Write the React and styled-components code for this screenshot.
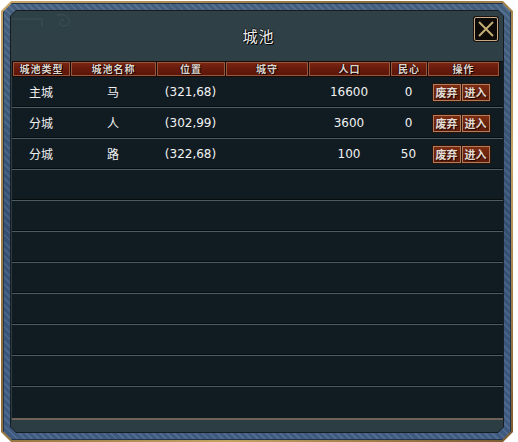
import React from 'react';
import styled, { createGlobalStyle } from 'styled-components';

const GlobalStyle = createGlobalStyle`
  html, body {
    margin: 0;
    padding: 0;
    background: #ffffff;
  }
  body {
    font-family: "DejaVu Sans", "Noto Sans CJK SC", sans-serif;
  }
`;

const bevel = (c) => `polygon(${c}px 0, calc(100% - ${c}px) 0, 100% ${c}px, 100% calc(100% - ${c}px), calc(100% - ${c}px) 100%, ${c}px 100%, 0 calc(100% - ${c}px), 0 ${c}px)`;

const Frame = styled.div`
  margin: 1px 0 0 1px;
  width: 512px;
  height: 441px;
  padding: 2px;
  box-sizing: border-box;
  background: linear-gradient(135deg, #c9a868, #8a6a38 40%, #c4a464 70%, #7a5a30);
  clip-path: ${bevel(10)};
`;

const Stone = styled.div`
  height: 100%;
  padding: 7px;
  box-sizing: border-box;
  background:
    repeating-linear-gradient(45deg, rgba(255,255,255,0.06) 0 2px, rgba(0,0,0,0.08) 2px 5px),
    linear-gradient(180deg, #4a6688, #39557a 50%, #45628a);
  clip-path: ${bevel(9)};
  box-shadow: inset 0 0 0 1px #22344c;
`;

const Rim = styled.div`
  height: 100%;
  padding: 1px;
  box-sizing: border-box;
  background: #151d21;
  clip-path: ${bevel(6)};
`;

const Panel = styled.div`
  position: relative;
  height: 100%;
  box-sizing: border-box;
  padding: 0 0 0 1px;
  display: flex;
  flex-direction: column;
  background: linear-gradient(180deg, #2f4147, #2a3a40 60%, #2c3d43);
  clip-path: ${bevel(5)};
`;

const TitleBar = styled.div`
  height: 52px;
  display: flex;
  align-items: center;
  justify-content: center;
`;

const Title = styled.div`
  font-family: "Noto Sans CJK SC", sans-serif;
  font-size: 15px;
  color: #ececec;
  letter-spacing: 1px;
  text-shadow: 1px 1px 0 #000, -1px 0 0 #111, 0 -1px 0 #111;
  margin-left: 2px;
  margin-top: -2px;
`;

const Ornament = styled.svg`
  position: absolute;
  left: 1px;
  top: 0;
  opacity: 0.09;
`;

const CloseButton = styled.button`
  position: absolute;
  right: 5px;
  top: 6px;
  width: 24px;
  height: 24px;
  padding: 0;
  background: #0d0907;
  border: 1px solid #c8aa88;
  border-radius: 2px;
  box-shadow: 0 0 0 1px #1a1410;
  display: flex;
  align-items: center;
  justify-content: center;
  cursor: pointer;
`;

const Table = styled.div`
  flex: 1;
  display: flex;
  flex-direction: column;
  background: #111c22;
  border-top: 1px solid #0c1114;
  border-bottom: 2px solid #6e6258;
  margin-bottom: 12px;
`;

const cols = '58px 86px 69px 83px 82px 37px 72px';

const HeadRow = styled.div`
  display: grid;
  grid-template-columns: ${cols};
  height: 15px;
  padding-bottom: 1px;
  box-sizing: border-box;
`;

const HeadCell = styled.div`
  margin-left: 1px;
  box-sizing: border-box;
  border: 1px solid #94583f;
  outline: 1px solid #1c0904;
  background: linear-gradient(180deg, #7a2412, #661a0b 55%, #5c160a);
  display: flex;
  align-items: center;
  justify-content: center;
  font-family: "Noto Sans CJK SC", sans-serif;
  font-size: 10px;
  font-weight: bold;
  letter-spacing: 1px;
  color: #dcd6d0;
  text-shadow: 1px 1px 0 #1a0500, -1px 0 0 #2a0802;
  line-height: 1;
`;

const Row = styled.div`
  display: grid;
  grid-template-columns: ${cols};
  height: 31px;
  box-sizing: border-box;
  border-bottom: 1px solid #4c5b61;
  box-shadow: inset 0 -1px 0 #070c0f;
  &:last-child {
    border-bottom: none;
    box-shadow: none;
  }
`;

const Cell = styled.div`
  display: flex;
  align-items: center;
  justify-content: center;
  font-size: 12px;
  color: #f2f2f2;
  padding-bottom: 1px;
`;

const Actions = styled.div`
  display: flex;
  align-items: center;
  justify-content: center;
  gap: 1px;
  padding-right: 4px;
`;

const ActionButton = styled.button`
  width: 28px;
  height: 17px;
  padding: 0;
  box-sizing: border-box;
  border: 1px solid #b07c5a;
  outline: 1px solid #2a140a;
  background: linear-gradient(180deg, #7c2c12, #5e1c0a);
  font-family: "Noto Sans CJK SC", sans-serif;
  font-size: 11px;
  font-weight: bold;
  color: #e4dcd4;
  text-shadow: 1px 1px 0 #200800;
  line-height: 1;
  cursor: pointer;
`;

const columns = ['城池类型', '城池名称', '位置', '城守', '人口', '民心', '操作'];

const cities = [
  { type: '主城', name: '马', pos: '(321,68)', guard: '', people: 16600, heart: 0 },
  { type: '分城', name: '人', pos: '(302,99)', guard: '', people: 3600, heart: 0 },
  { type: '分城', name: '路', pos: '(322,68)', guard: '', people: 100, heart: 50 },
];

const TOTAL_ROWS = 11;

const App = () => {
  const empty = Array.from({ length: TOTAL_ROWS - cities.length });

  return (
    <>
      <GlobalStyle />
      <Frame>
        <Stone>
          <Rim>
            <Panel>
              <Ornament width="70" height="30" viewBox="0 0 70 30">
                <path d="M0 8 H30 V16 M45 4 q8 -2 12 4 q2 6 -5 7 q-5 0 -4 -4 q1 -3 4 -2" fill="none" stroke="#c8d8d8" strokeWidth="1" />
              </Ornament>
              <TitleBar>
                <Title>城池</Title>
              </TitleBar>
              <CloseButton>
                <svg width="18" height="18" viewBox="0 0 18 18">
                  <path d="M2 2 L16 16 M16 2 L2 16" stroke="#c4ac74" strokeWidth="2" />
                </svg>
              </CloseButton>
              <Table>
                <HeadRow>
                  {columns.map((c) => (
                    <HeadCell key={c}>{c}</HeadCell>
                  ))}
                </HeadRow>
                {cities.map((city) => (
                  <Row key={city.name}>
                    <Cell>{city.type}</Cell>
                    <Cell>{city.name}</Cell>
                    <Cell>{city.pos}</Cell>
                    <Cell>{city.guard}</Cell>
                    <Cell>{city.people}</Cell>
                    <Cell>{city.heart}</Cell>
                    <Actions>
                      <ActionButton>废弃</ActionButton>
                      <ActionButton>进入</ActionButton>
                    </Actions>
                  </Row>
                ))}
                {empty.map((_, i) => (
                  <Row key={i} />
                ))}
              </Table>
            </Panel>
          </Rim>
        </Stone>
      </Frame>
    </>
  );
};

export default App;
